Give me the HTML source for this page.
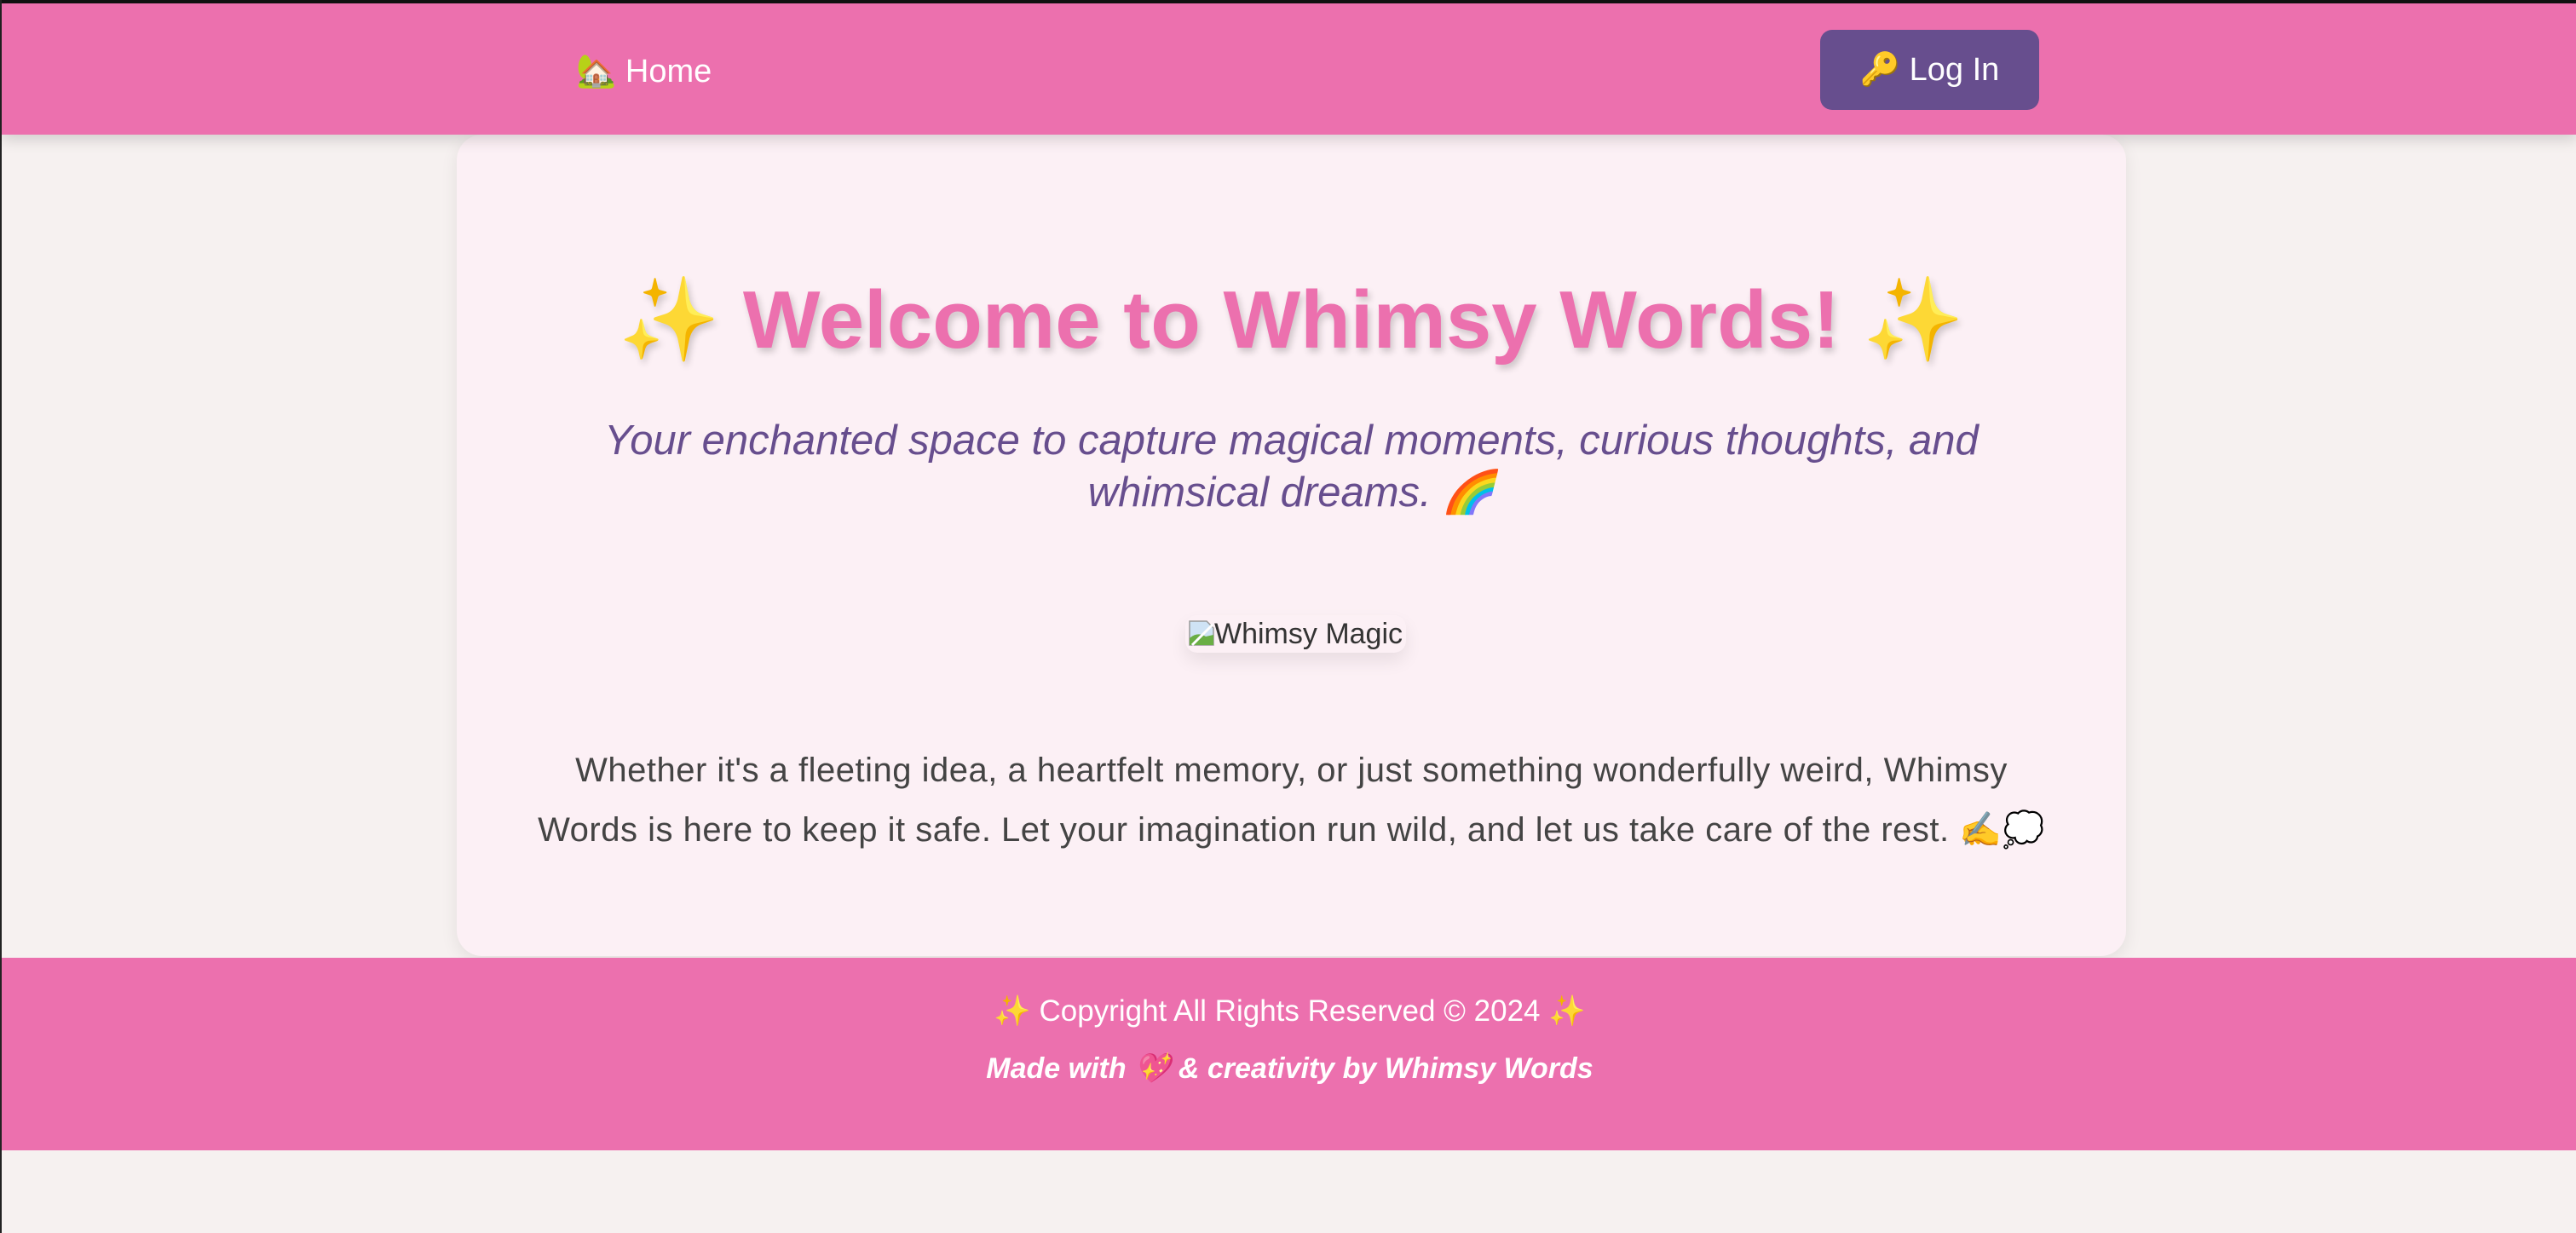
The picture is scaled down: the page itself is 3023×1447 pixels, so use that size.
<!DOCTYPE html>
<html><head><meta charset="utf-8"><style>
html,body{margin:0;padding:0;}
body{width:3023px;height:1447px;background:#f6f1f0;font-family:"Liberation Sans","Noto Sans CJK JP",sans-serif;position:relative;overflow:hidden;border-left:2px solid #222;box-sizing:border-box;}
.top{position:absolute;left:0;top:0;width:3023px;height:4px;background:#111;}
nav{position:absolute;left:0;top:4px;width:3023px;height:154px;background:#ec70ae;box-shadow:0 6px 16px rgba(0,0,0,.15);z-index:2;}
.home{position:absolute;left:674px;top:58px;color:#fff;font-size:38px;}
.login{position:absolute;left:2134px;top:31px;width:257px;height:94px;background:#674e8e;border-radius:14px;color:#fff;font-size:38px;line-height:94px;text-align:center;}
.card{position:absolute;left:534px;top:158px;width:1959px;height:964px;background:#fcf0f5;border-radius:30px;box-shadow:0 6px 20px rgba(0,0,0,.08);text-align:center;}
h1{position:absolute;left:0;right:0;top:158px;margin:0;font-size:96px;color:#ec70ae;font-weight:bold;text-shadow:3px 5px 8px rgba(0,0,0,.18);line-height:120px;}
.sub{position:absolute;left:110px;right:110px;top:329px;font-size:49px;font-style:italic;color:#674e8e;line-height:61px;}
.img{position:absolute;left:855px;top:564px;padding:0 4px;height:44px;background:#fcf0f5;border-radius:14px;box-shadow:0 10px 20px rgba(0,0,0,.08);font-size:34px;color:#333;line-height:44px;white-space:nowrap;}
.p{position:absolute;left:0;right:0;top:711px;font-size:40px;letter-spacing:0.5px;line-height:70px;color:#444;white-space:nowrap;}
footer{position:absolute;left:0;top:1124px;width:3023px;height:226px;background:#ec70ae;text-align:center;color:#fff;}
.f1{position:absolute;left:0;right:0;top:42px;font-size:35px;}
.f2{position:absolute;left:0;right:0;top:110px;font-size:34px;font-weight:bold;font-style:italic;}
</style></head><body>
<div class="top"></div>
<nav><div class="home">🏡 Home</div><div class="login">🔑 Log In</div></nav>
<div class="card">
<h1>✨ Welcome to Whimsy Words! ✨</h1>
<div class="sub">Your enchanted space to capture magical moments, curious thoughts, and<br>whimsical dreams. 🌈</div>
<div class="img"><svg width="30" height="32" viewBox="0 0 30 32" style="vertical-align:-4px"><path d="M1 2h20l8 8v20H1z" fill="#cfe3f5" stroke="#999" stroke-width="1.5"/><path d="M1 30 L1 22 Q10 14 20 20 L29 18 L29 30z" fill="#6aae45"/><path d="M4 30 L28 6" stroke="#fff" stroke-width="3"/></svg>Whimsy Magic</div>
<div class="p">Whether it's a fleeting idea, a heartfelt memory, or just something wonderfully weird, Whimsy<br>Words is here to keep it safe. Let your imagination run wild, and let us take care of the rest. ✍️💭</div>
</div>
<footer>
<div class="f1">✨ Copyright All Rights Reserved © 2024 ✨</div>
<div class="f2">Made with 💖 &amp; creativity by Whimsy Words</div>
</footer>
</body></html>
